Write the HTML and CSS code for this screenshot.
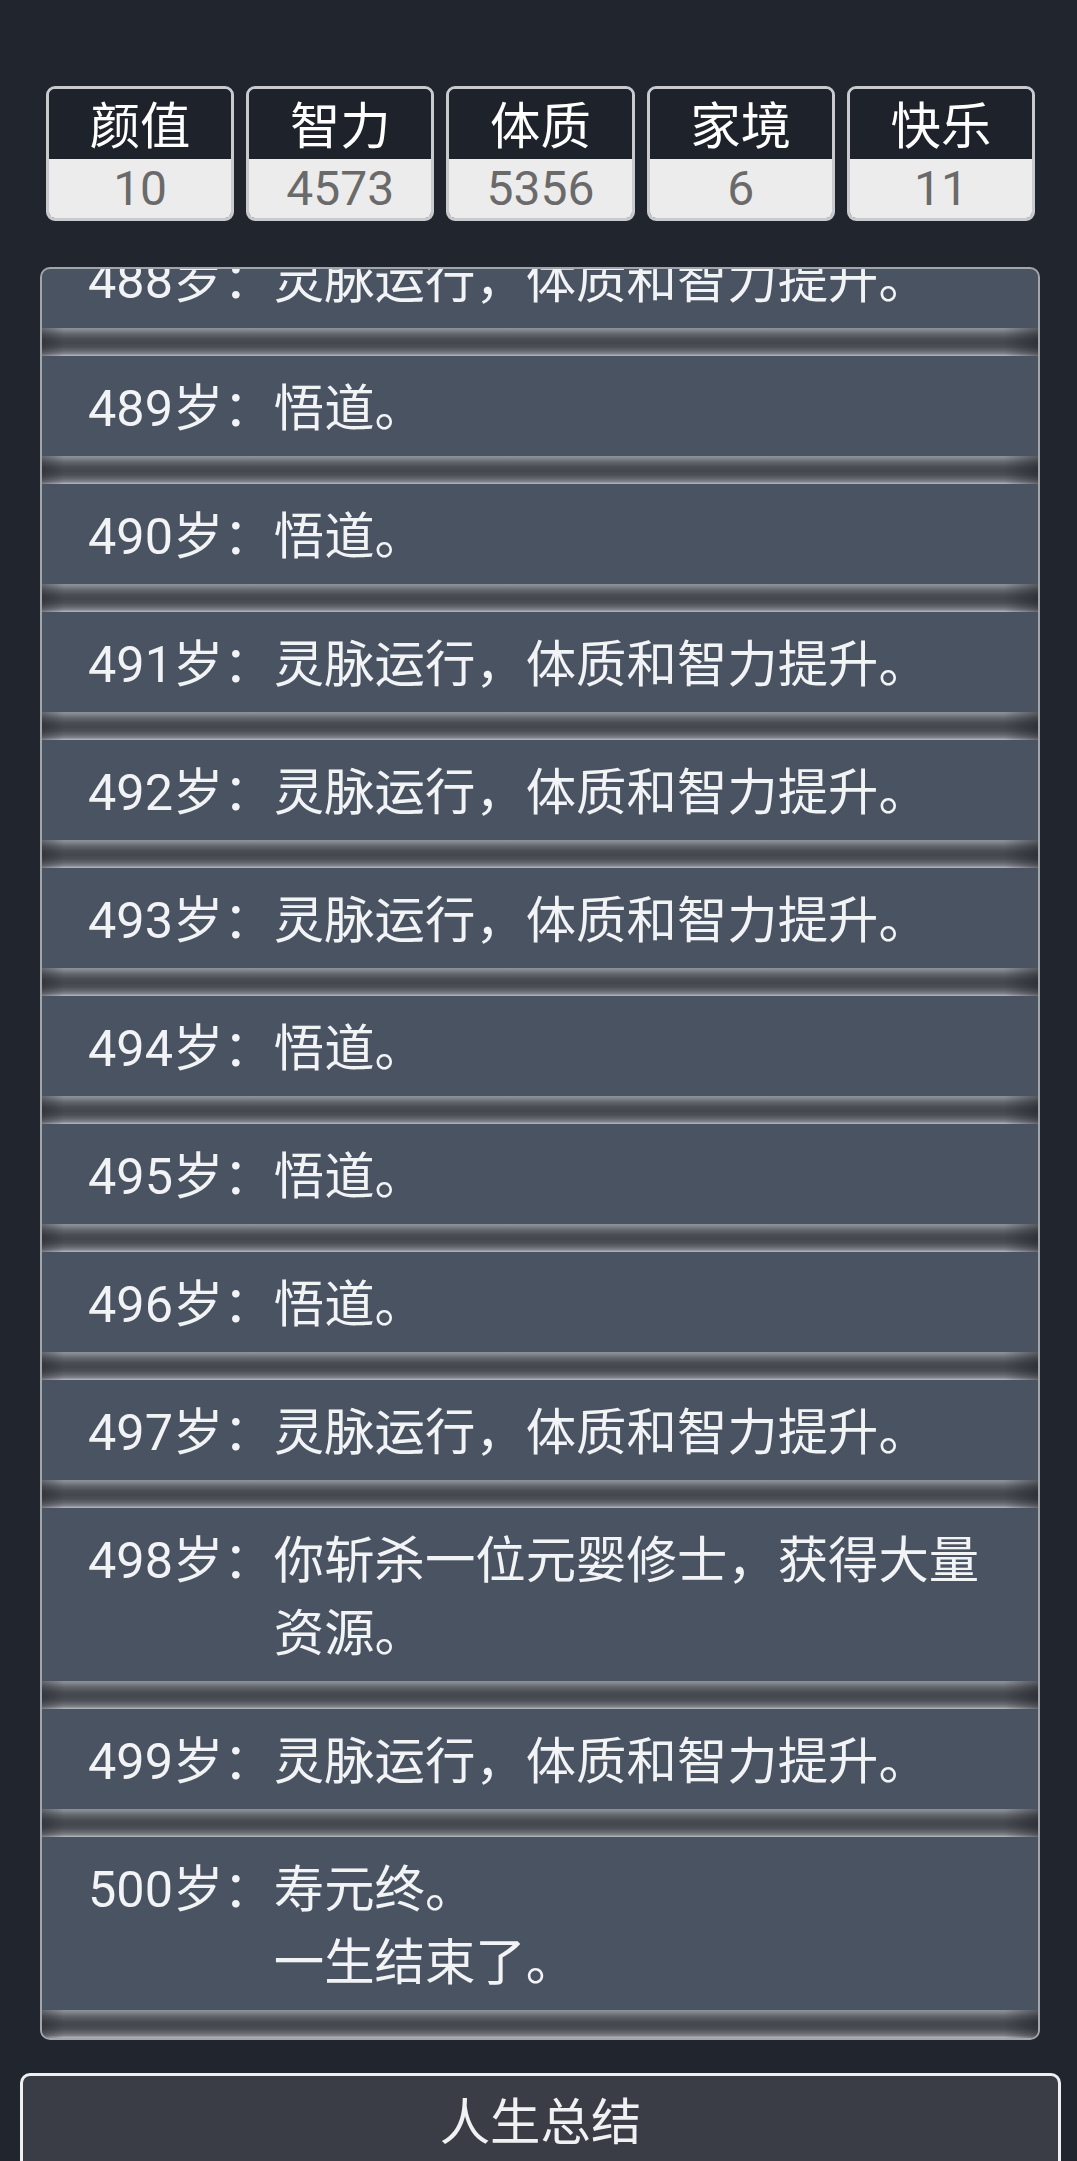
FILE: index.html
```html
<!DOCTYPE html>
<html lang="zh-CN">
<head>
<meta charset="utf-8">
<title>人生重开</title>
<link rel="stylesheet" href="styles.css">
</head>
<body>
<main class="page">
  <section class="stats">
    <div class="stat"><div class="stat-label">颜值</div><div class="stat-value">10</div></div>
    <div class="stat"><div class="stat-label">智力</div><div class="stat-value">4573</div></div>
    <div class="stat"><div class="stat-label">体质</div><div class="stat-value">5356</div></div>
    <div class="stat"><div class="stat-label">家境</div><div class="stat-value">6</div></div>
    <div class="stat"><div class="stat-label">快乐</div><div class="stat-value">11</div></div>
  </section>

  <ul class="log">
    <li class="entry"><div class="entry-body"><span class="age">488岁：</span><span class="event">灵脉运行，体质和智力提升。</span></div></li>
    <li class="entry"><div class="entry-body"><span class="age">489岁：</span><span class="event">悟道。</span></div></li>
    <li class="entry"><div class="entry-body"><span class="age">490岁：</span><span class="event">悟道。</span></div></li>
    <li class="entry"><div class="entry-body"><span class="age">491岁：</span><span class="event">灵脉运行，体质和智力提升。</span></div></li>
    <li class="entry"><div class="entry-body"><span class="age">492岁：</span><span class="event">灵脉运行，体质和智力提升。</span></div></li>
    <li class="entry"><div class="entry-body"><span class="age">493岁：</span><span class="event">灵脉运行，体质和智力提升。</span></div></li>
    <li class="entry"><div class="entry-body"><span class="age">494岁：</span><span class="event">悟道。</span></div></li>
    <li class="entry"><div class="entry-body"><span class="age">495岁：</span><span class="event">悟道。</span></div></li>
    <li class="entry"><div class="entry-body"><span class="age">496岁：</span><span class="event">悟道。</span></div></li>
    <li class="entry"><div class="entry-body"><span class="age">497岁：</span><span class="event">灵脉运行，体质和智力提升。</span></div></li>
    <li class="entry"><div class="entry-body"><span class="age">498岁：</span><span class="event">你斩杀一位元婴修士，获得大量资源。</span></div></li>
    <li class="entry"><div class="entry-body"><span class="age">499岁：</span><span class="event">灵脉运行，体质和智力提升。</span></div></li>
    <li class="entry"><div class="entry-body"><span class="age">500岁：</span><span class="event">寿元终。<br>一生结束了。</span></div></li>
  </ul>

  <button class="summary" type="button">人生总结</button>
</main>
</body>
</html>
```

FILE: styles.css
```css
html, body {
  margin: 0;
  padding: 0;
}

body {
  background: #21262e;
  color: #f2f3f5;
  font-family: Roboto, "Noto Sans CJK SC", "Noto Sans", sans-serif;
}

.page {
  display: flex;
  flex-direction: column;
  padding-top: 86px;
}

/* ---------- stat boxes ---------- */
.stats {
  display: flex;
  gap: 12px;
  margin: 0 42px 0 46px;
}

.stat {
  flex: 1 1 0;
  border: 3px solid #c8cacd;
  border-radius: 9px;
  overflow: hidden;
  text-align: center;
}

.stat-label {
  background: #1e222a;
  color: #ffffff;
  font-size: 50.4px;
  height: 70px;
  line-height: 76px;
}

.stat-value {
  background: #ececec;
  color: #6a6a6a;
  font-size: 48px;
  height: 59px;
  line-height: 60px;
}

/* ---------- life log ---------- */
.log {
  list-style: none;
  margin: 46px 37px 0 40px;
  padding: 0;
  box-sizing: border-box;
  height: 1773px;
  border: 2px solid #a2a5aa;
  border-radius: 10px;
  background: #4a5362;
  overflow: hidden;
  display: flex;
  flex-direction: column;
  justify-content: flex-end;
}

.entry {
  flex: 0 0 auto;
}

.entry-body {
  display: flex;
  padding: 15.5px 45px 11.5px 46px;
  font-size: 50.4px;
  line-height: 73px;
  color: #f2f3f5;
}

.age {
  flex: 0 0 auto;
  white-space: nowrap;
}

.event {
  flex: 1 1 auto;
}

.entry::after {
  content: "";
  display: block;
  height: 28px;
  background:
    linear-gradient(to right, rgba(20, 22, 28, 0.35) 0, rgba(20, 22, 28, 0) 22px, rgba(20, 22, 28, 0) calc(100% - 34px), rgba(20, 22, 28, 0.45) 100%),
    linear-gradient(to bottom, #8f9399 0, #83878e 2px, #62666d 6px, #4a4d54 11px, #44474e 15px, #4c4f56 19px, #65686e 23px, #83868c 26px, #a7aaaf 27px, #b1b4b9 28px);
}

/* ---------- summary button ---------- */
.summary {
  margin: 33px 16px 0 20px;
  padding: 10px 0 12px;
  border: 3px solid #eef0f3;
  border-radius: 10px;
  background: #3a3d45;
  color: #f0f1f3;
  font-family: Roboto, "Noto Sans CJK SC", "Noto Sans", sans-serif;
  font-size: 50.4px;
  line-height: 73px;
  text-align: center;
}
```
